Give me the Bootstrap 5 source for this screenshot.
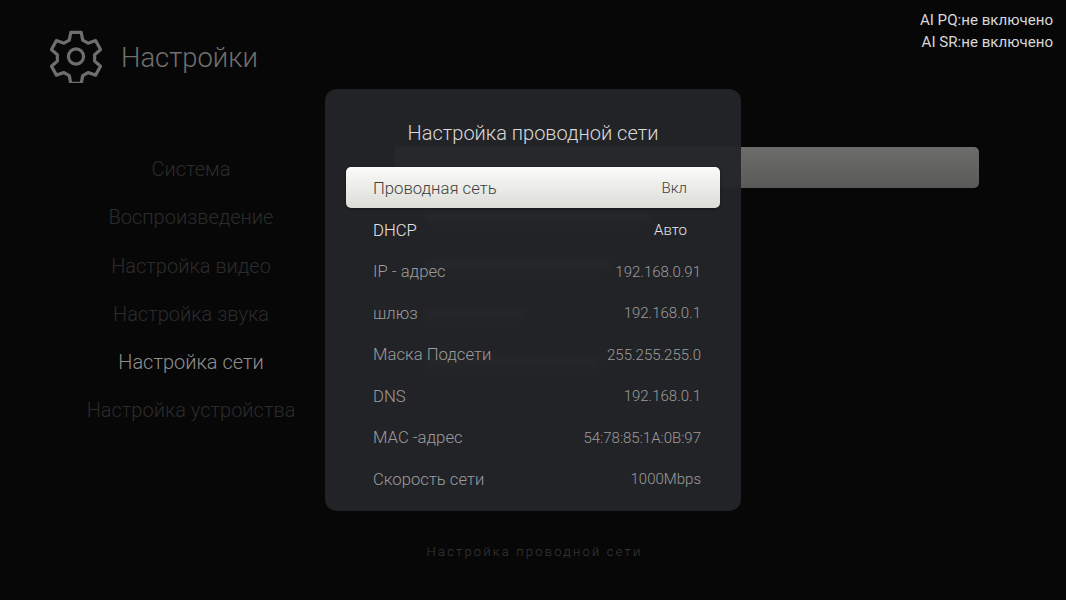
<!DOCTYPE html>
<html lang="ru">
<head>
<meta charset="utf-8">
<title>Настройки</title>
<link rel="stylesheet" href="https://cdn.jsdelivr.net/npm/bootstrap@5.3.0/dist/css/bootstrap.min.css">
<style>
html,body{height:600px;overflow:hidden;}
body{background:#070707;font-family:Roboto,"Noto Sans",sans-serif;font-weight:300;position:relative;}
.stage{width:1066px;height:600px;}
.ai-status{position:absolute;top:9px;right:13px;text-align:right;font-size:15.1px;line-height:22px;font-weight:400;color:#d8d8d8;}
.page-head{height:147px;padding:30px 0 0 50px;}
.page-head svg{width:52px;height:53px;}
.page-title{font-size:27.4px;line-height:56px;color:#6f6f6f;margin-left:19px;}
.side-menu{width:382px;}
.side-item{height:48.25px;line-height:44px;font-size:20px;color:#2c2c2c;text-align:center;}
.side-item.is-on{color:#8f8f8f;}
.main-col{width:584px;margin-left:13px;}
.bar{height:41px;background:linear-gradient(#6c6c6a,#5a5a58);border-radius:0 5px 5px 0;}
.ghost-row{height:48.3px;padding:18px 0 0 30px;}
.ghost-first{margin-top:5px;}
.ghost-smudge{display:block;height:12px;background:#3a3a3a;border-radius:3px;filter:blur(2px);}
.dialog-box{position:absolute;left:325px;top:89px;width:416px;height:422px;background:rgba(36,37,41,.95);border-radius:12px;padding-top:28px;}
.dialog-title{font-size:20px;line-height:32px;color:#d9d9d9;text-align:center;margin-bottom:18px;}
.dialog-list{padding:0 21px;}
.opt-row{height:41.55px;padding:3px 19px 0 27px;font-size:16.7px;color:#9c9c9c;}
.opt-row .val{font-size:15px;}
.opt-row.is-bright{color:#e6e6e6;padding-right:33px;}
.opt-row.is-sel{height:41px;padding-top:2px;background:linear-gradient(#fbfbfa,#dcdcd7);border-radius:5px;color:#3f3f3f;padding-right:33px;box-shadow:0 1px 3px rgba(0,0,0,.4);}
.hint{position:absolute;left:0;right:0;top:543px;padding-left:3px;text-align:center;font-size:13px;line-height:17px;letter-spacing:2.2px;color:#3a3a3a;}
</style>
</head>
<body>
<div class="stage">
  <div class="ai-status"><div>AI PQ:не включено</div><div>AI SR:не включено</div></div>
  <header class="page-head d-flex align-items-start">
    <svg viewBox="0 0 54 56" fill="none" stroke="#6e6e6e" stroke-width="3.4" stroke-linejoin="round" aria-hidden="true">
      <path d="M21.5 2.5h11l1.6 8.2 5.6 3.2 8-2.7 5.2 9.4-6.2 5.6v6.5l6.2 5.6-5.2 9.4-8-2.7-5.6 3.2-1.6 8.3h-11l-1.6-8.3-5.6-3.2-8 2.7-5.2-9.4 6.2-5.6v-6.5l-6.2-5.6 5.2-9.4 8 2.7 5.6-3.2z"/>
      <circle cx="27" cy="28" r="8"/>
    </svg>
    <div class="page-title">Настройки</div>
  </header>
  <div class="d-flex">
    <nav class="side-menu">
      <div class="side-item">Система</div>
      <div class="side-item">Воспроизведение</div>
      <div class="side-item">Настройка видео</div>
      <div class="side-item">Настройка звука</div>
      <div class="side-item is-on">Настройка сети</div>
      <div class="side-item">Настройка устройства</div>
    </nav>
    <main class="main-col">
      <div class="bar"></div>
      <div class="ghost-row ghost-first"><span class="ghost-smudge" style="width:225px"></span></div>
      <div class="ghost-row"><span class="ghost-smudge" style="width:185px"></span></div>
      <div class="ghost-row"><span class="ghost-smudge" style="width:100px"></span></div>
      <div class="ghost-row"><span class="ghost-smudge" style="width:175px"></span></div>
    </main>
  </div>
  <section class="dialog-box">
    <div class="dialog-title">Настройка проводной сети</div>
    <div class="dialog-list">
      <div class="opt-row is-sel d-flex justify-content-between align-items-center"><span>Проводная сеть</span><span class="val">Вкл</span></div>
      <div class="opt-row is-bright d-flex justify-content-between align-items-center"><span>DHCP</span><span class="val">Авто</span></div>
      <div class="opt-row d-flex justify-content-between align-items-center"><span>IP - адрес</span><span class="val">192.168.0.91</span></div>
      <div class="opt-row d-flex justify-content-between align-items-center"><span>шлюз</span><span class="val">192.168.0.1</span></div>
      <div class="opt-row d-flex justify-content-between align-items-center"><span>Маска Подсети</span><span class="val">255.255.255.0</span></div>
      <div class="opt-row d-flex justify-content-between align-items-center"><span>DNS</span><span class="val">192.168.0.1</span></div>
      <div class="opt-row d-flex justify-content-between align-items-center"><span>MAC -адрес</span><span class="val">54:78:85:1A:0B:97</span></div>
      <div class="opt-row d-flex justify-content-between align-items-center"><span>Скорость сети</span><span class="val">1000Mbps</span></div>
    </div>
  </section>
  <div class="hint">Настройка проводной сети</div>
</div>
<script src="https://cdn.jsdelivr.net/npm/bootstrap@5.3.0/dist/js/bootstrap.bundle.min.js"></script>
</body>
</html>
